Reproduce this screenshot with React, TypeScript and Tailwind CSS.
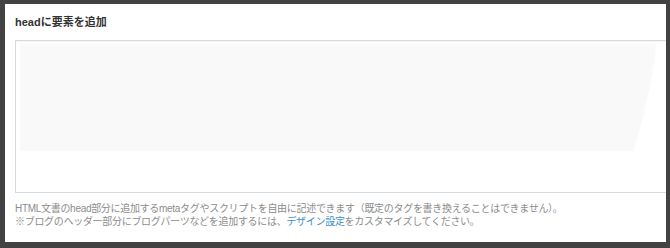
// Settings panel: add elements to <head>
// Title, code textarea and help notes under it

const FONT = "font-['Liberation_Sans','Noto_Sans_CJK_JP',sans-serif]";

export default function App() {
  return (
    <div className={`w-[670px] h-[248px] bg-[#424242] pt-[4px] pl-[5px] pr-[4px] pb-[6px] ${FONT}`}>
      <div className="h-full bg-white overflow-hidden pl-[10px]">
        <h3 className="pt-[11px] h-[36px] text-[11px] leading-[14px] font-bold text-[#333]">
          headに要素を追加
        </h3>
        <div className="w-[680px] h-[153px] border border-[#d3dbe0] shadow-[inset_0_1px_1px_rgba(0,0,0,0.04)] pt-[3px] pl-[4px]">
          <div className="w-[636px] h-[107px] bg-[#f9f9f9] [clip-path:polygon(0_0,100%_0,99.8%_15%,99.2%_35%,98.3%_60%,97.2%_85%,96.4%_100%,0_100%)]" />
        </div>
        <div className="pt-[9px] text-[10px] leading-[13px] tracking-[-0.3px] text-[#8c8c8c]">
          <p>HTML文書のhead部分に追加するmetaタグやスクリプトを自由に記述できます（既定のタグを書き換えることはできません）。</p>
          <p>
            ※ブログのヘッダー部分にブログパーツなどを追加するには、
            <a className="text-[#3b8dc8]">デザイン設定</a>
            をカスタマイズしてください。
          </p>
        </div>
      </div>
    </div>
  );
}
